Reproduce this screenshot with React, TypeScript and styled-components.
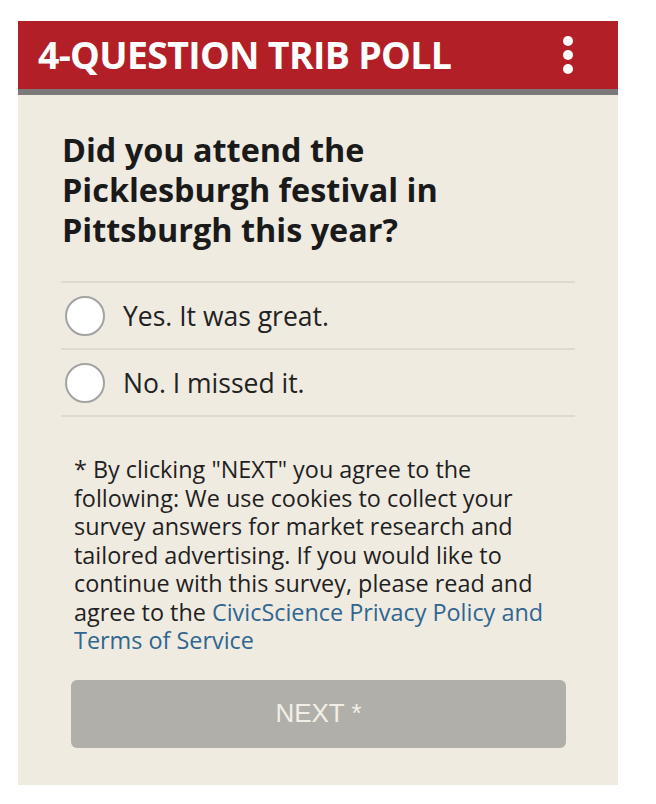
import React from "react";
import styled, { createGlobalStyle } from "styled-components";

const Global = createGlobalStyle`
  html, body { margin: 0; padding: 0; background: #ffffff; }
  body { font-family: "Open Sans", "Liberation Sans", sans-serif; }
`;

const Page = styled.div`
  padding: 21px 0 0 18px;
`;

const Card = styled.section`
  width: 600px;
  background: #f0ebe1;
  padding-bottom: 37px;
`;

const Header = styled.header`
  height: 68px;
  background: #b31f26;
  border-bottom: 6px solid #7b7979;
  display: flex;
  align-items: center;
  justify-content: space-between;
  padding: 0 45px 0 20px;
`;

const Title = styled.h1`
  margin: 0;
  color: #ffffff;
  font-family: "Open Sans", sans-serif;
  font-weight: 700;
  font-size: 37.5px;
  letter-spacing: -0.7px;
  line-height: 1;
  white-space: nowrap;
`;

const Kebab = styled.div`
  display: flex;
  flex-direction: column;
  gap: 4px;
`;

const Dot = styled.span`
  width: 10px;
  height: 10px;
  border-radius: 50%;
  background: #ffffff;
`;

const Body = styled.div`
  padding: 34px 43px 0;
`;

const Question = styled.h2`
  margin: 0 0 32px 1px;
  font-family: "Open Sans", sans-serif;
  font-weight: 700;
  font-size: 32.4px;
  line-height: 40px;
  color: #1a1a1a;
  max-width: 470px;
`;

const Options = styled.div`
  border-top: 2px solid #dedad3;
`;

const Option = styled.label`
  display: flex;
  align-items: center;
  height: 65px;
  border-bottom: 2px solid #dedad3;
  padding-left: 4px;
  gap: 18px;
  cursor: pointer;
`;

const Radio = styled.span`
  width: 36px;
  height: 36px;
  border-radius: 50%;
  background: #ffffff;
  border: 2px solid #a3a3a3;
  flex: none;
`;

const OptionText = styled.span`
  font-size: 26.5px;
  color: #222222;
  font-family: "Open Sans", sans-serif;
`;

const Disclaimer = styled.p`
  margin: 38px 13px 25px 13px;
  font-size: 23.4px;
  line-height: 28.5px;
  color: #1f1f1f;
`;

const Link = styled.a`
  color: #2f6690;
  text-decoration: none;
`;

const NextButton = styled.button`
  display: block;
  width: 495px;
  height: 68px;
  margin-left: 10px;
  border: none;
  border-radius: 6px;
  background: #b0afa9;
  color: #f2efe7;
  font-family: "Liberation Sans", Arial, sans-serif;
  font-size: 26px;
`;

const options = ["Yes. It was great.", "No. I missed it."];

export default function App() {
  return (
    <Page>
      <Global />
      <Card>
        <Header>
          <Title>4-QUESTION TRIB POLL</Title>
          <Kebab>
            <Dot />
            <Dot />
            <Dot />
          </Kebab>
        </Header>
        <Body>
          <Question>Did you attend the Picklesburgh festival in Pittsburgh this year?</Question>
          <Options>
            {options.map((o) => (
              <Option key={o}>
                <Radio />
                <OptionText>{o}</OptionText>
              </Option>
            ))}
          </Options>
          <Disclaimer>
            * By clicking "NEXT" you agree to the following: We use cookies to collect your survey
            answers for market research and tailored advertising. If you would like to continue with
            this survey, please read and agree to the{" "}
            <Link href="#">CivicScience Privacy Policy and Terms of Service</Link>
          </Disclaimer>
          <NextButton>NEXT *</NextButton>
        </Body>
      </Card>
    </Page>
  );
}
